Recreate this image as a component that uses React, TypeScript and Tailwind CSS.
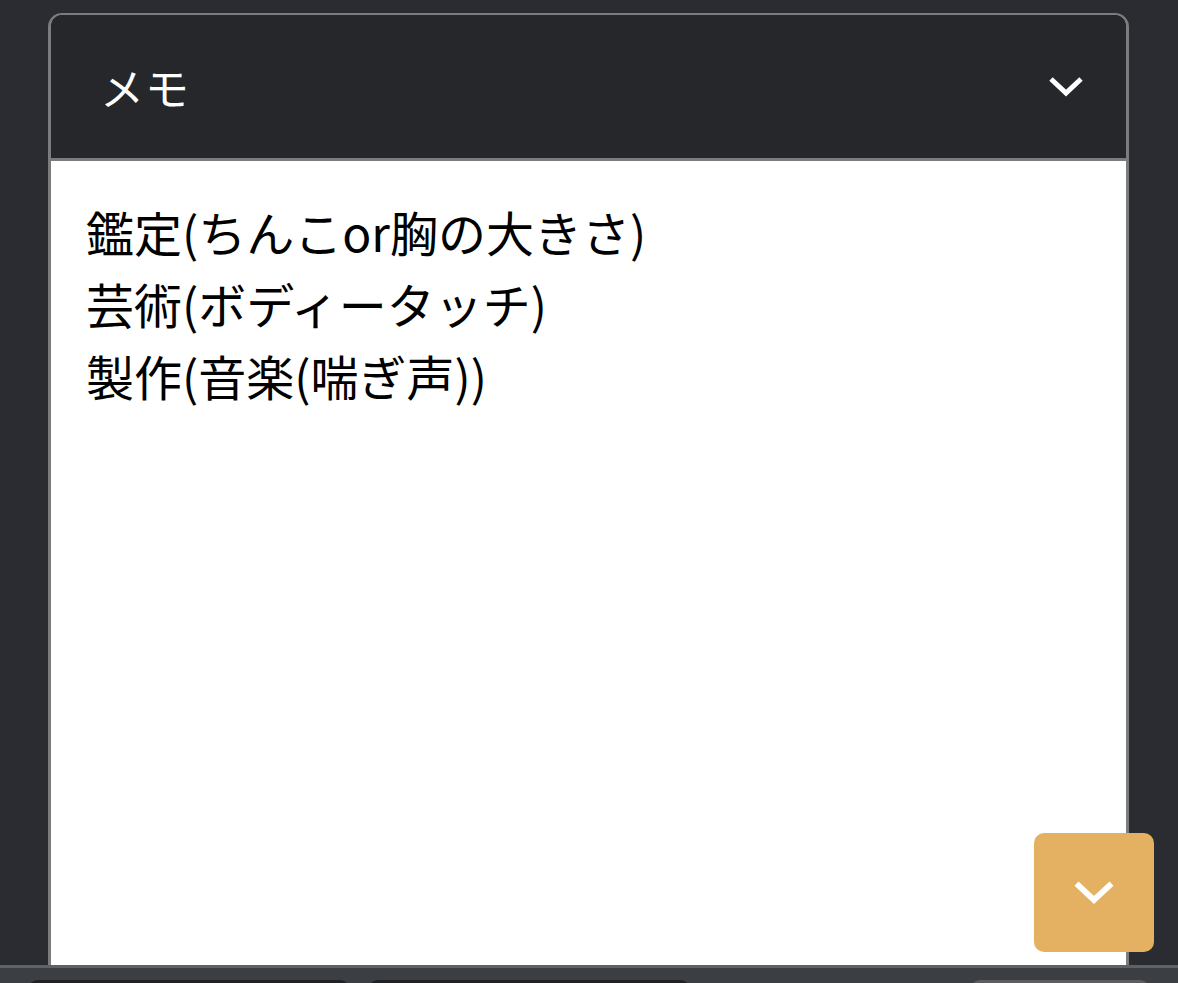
import React from "react";

const Chevron = ({ className }: { className?: string }) => (
  <svg viewBox="0 0 36 24" className={className} fill="none">
    <path d="M3 4 L18 18 L33 4" stroke="currentColor" strokeWidth="5" strokeLinecap="butt" strokeLinejoin="miter" />
  </svg>
);

export default function App() {
  const font = { fontFamily: '"Noto Sans CJK JP", "Noto Sans", sans-serif' };
  return (
    <div className="relative flex h-[983px] w-[1178px] flex-col overflow-hidden bg-[#2a2c31]" style={font}>
      <div className="flex flex-1 flex-col pl-[48px] pr-[49px] pt-[13px]">
        <div className="flex flex-1 flex-col overflow-hidden rounded-t-[14px] border-x-[3px] border-t-[2px] border-[#7b7c7e]">
          <div className="flex h-[146px] items-center justify-between bg-[#25272b] pl-[49px] pr-[42px] border-b-[3px] border-[#7b7c7e]">
            <span className="text-[44px] leading-none tracking-[1px] text-white">メモ</span>
            <Chevron className="h-[24px] w-[36px] text-white" />
          </div>
          <div className="flex-1 bg-white pl-[35px] pt-[34px] text-[48px] leading-[72px] text-black">
            <div>鑑定(ちんこor胸の大きさ)</div>
            <div>芸術(ボディータッチ)</div>
            <div>製作(音楽(喘ぎ声))</div>
          </div>
        </div>
      </div>
      <div className="relative h-[18px] border-t-[3px] border-[#5f6164] bg-[#3b3e42]">
        <div className="absolute left-[28px] top-[12px] h-[20px] w-[322px] rounded-t-[10px] bg-[#1f2125]" />
        <div className="absolute left-[368px] top-[12px] h-[20px] w-[322px] rounded-t-[10px] bg-[#1f2125]" />
        <div className="absolute left-[970px] top-[12px] h-[20px] w-[180px] rounded-t-[10px] bg-[#5b5d61]" />
      </div>
      <button className="absolute left-[1034px] top-[833px] flex h-[119px] w-[120px] items-center justify-center rounded-[10px] bg-[#e4b061]">
        <Chevron className="h-[28px] w-[42px] text-white" />
      </button>
    </div>
  );
}
